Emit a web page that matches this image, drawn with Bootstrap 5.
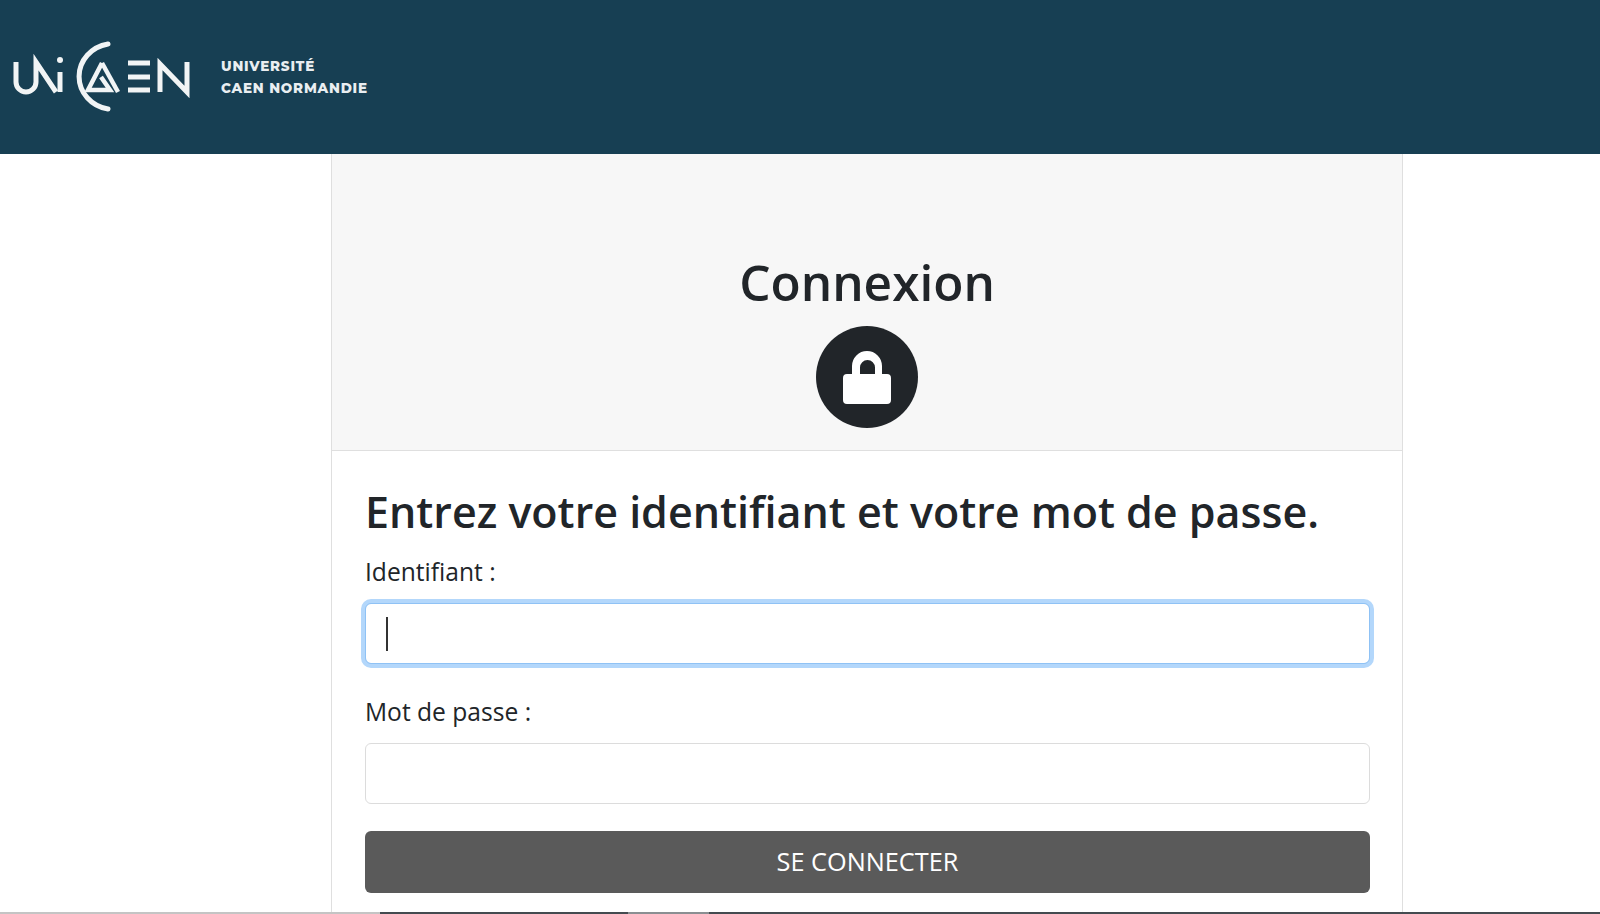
<!DOCTYPE html>
<html lang="fr">
  <head>
    <meta charset="UTF-8" />
    <meta name="viewport" content="width=device-width, initial-scale=1.0" />
    <title>Connexion</title>
    <link href="https://cdn.jsdelivr.net/npm/bootstrap@5.3.2/dist/css/bootstrap.min.css" rel="stylesheet" />
    <style>
      html, body {
        height: 914px;
        overflow: hidden;
      }
      body {
        font-family: "Open Sans", "Noto Sans", sans-serif;
        color: #212529;
      }
      .site-header {
        height: 154px;
        background-color: #173f53;
        padding-left: 12px;
        gap: 17px;
      }
      .brand-text {
        color: #e9eef1;
        font-family: "Montserrat", "Inter", sans-serif;
        font-size: 13.5px;
        font-weight: 800;
        line-height: 22px;
        letter-spacing: 0.8px;
      }
      .login-box {
        width: 1072px;
        margin-left: 331px;
        border-left: 1px solid #dfdfdf;
        border-right: 1px solid #dfdfdf;
      }
      .login-head {
        height: 297px;
        background-color: #f7f7f7;
        border-bottom: 1px solid #dfdfdf;
        padding-top: 100px;
      }
      .login-head h1 {
        font-size: 49.5px;
        font-weight: 600;
        line-height: 56px;
        margin-bottom: 16px;
      }
      .lock-disc {
        width: 102px;
        height: 102px;
        background-color: #212529;
      }
      .login-body {
        padding: 37px 32px 0 33px;
      }
      .login-body h2 {
        font-size: 43px;
        font-weight: 600;
        line-height: 48px;
        margin-bottom: 18px;
      }
      .login-body label {
        font-size: 24.6px;
        line-height: 36px;
        margin-bottom: 13px;
      }
      .login-body .form-control {
        height: 61px;
        font-size: 24px;
        border-color: #dcdcdc;
      }
      .login-body .field-focus {
        border-color: #8fc2f5;
        box-shadow: 0 0 0 4px #b3d7fb;
      }
      .field-gap {
        margin-bottom: 30px;
      }
      .field-gap-last {
        margin-bottom: 27px;
      }
      .text-caret {
        position: absolute;
        left: 21px;
        top: 14px;
        width: 2px;
        height: 34px;
        background-color: #333;
      }
      .btn-connect {
        height: 62px;
        background-color: #5a5a5a;
        color: #fff;
        font-size: 25.3px;
        text-transform: uppercase;
      }
      .bottom-rule {
        height: 2px;
      }
      .rule-gray {
        width: 380px;
        background-color: #c4c4c4;
      }
      .rule-dark {
        background-color: #444b50;
      }
      .rule-dark-a {
        width: 248px;
      }
      .rule-mid {
        width: 81px;
        background-color: #8a8f92;
      }
    </style>
  </head>
  <body class="d-flex flex-column">
    <header class="site-header d-flex align-items-center">
      <svg width="192" height="72" viewBox="0 0 192 72" fill="none" stroke="#f1f4f5" stroke-width="5">
        <path d="M4 21v20a10 10 0 0 0 20 0V21l20 30" />
        <circle cx="48" cy="19" r="3" fill="#f1f4f5" stroke="none" />
        <path d="M48 31v20" />
        <path d="M96 3A35 33 0 0 0 96 68" stroke-linecap="round" />
        <path d="M90 22 76 49h22L89 36" stroke-width="4.500" />
        <path d="M90 22l16 29" stroke-width="4.500" />
        <path d="M116 22h22M116 36h22M116 49h22" />
        <path d="M148 51V23l27 28V21" />
      </svg>
      <div class="brand-text">UNIVERSITÉ<br />CAEN NORMANDIE</div>
    </header>
    <main class="login-box flex-grow-1">
      <div class="login-head text-center">
        <h1>Connexion</h1>
        <div class="lock-disc rounded-circle d-flex align-items-center justify-content-center mx-auto">
          <svg width="48" height="53" viewBox="0 0 48 53">
            <path fill="#fff" fill-rule="evenodd" d="M9 23v-8a15 15 0 0 1 30 0v8h5a4 4 0 0 1 4 4v22a4 4 0 0 1-4 4H4a4 4 0 0 1-4-4V27a4 4 0 0 1 4-4zM17 23h15v-6.500a7.500 7.500 0 0 0-15 0z" />
          </svg>
        </div>
      </div>
      <form class="login-body">
        <h2>Entrez votre identifiant et votre mot de passe.</h2>
        <div class="field-gap">
          <label class="form-label" for="login">Identifiant :</label>
          <div class="position-relative">
            <input class="form-control field-focus" id="login" type="text" />
            <span class="text-caret"></span>
          </div>
        </div>
        <div class="field-gap-last">
          <label class="form-label" for="password">Mot de passe :</label>
          <input class="form-control" id="password" type="password" />
        </div>
        <button class="btn btn-connect w-100" type="submit">Se connecter</button>
      </form>
    </main>
    <div class="bottom-rule d-flex">
      <div class="rule-gray"></div>
      <div class="rule-dark rule-dark-a"></div>
      <div class="rule-mid"></div>
      <div class="rule-dark flex-grow-1"></div>
    </div>
  </body>
</html>
